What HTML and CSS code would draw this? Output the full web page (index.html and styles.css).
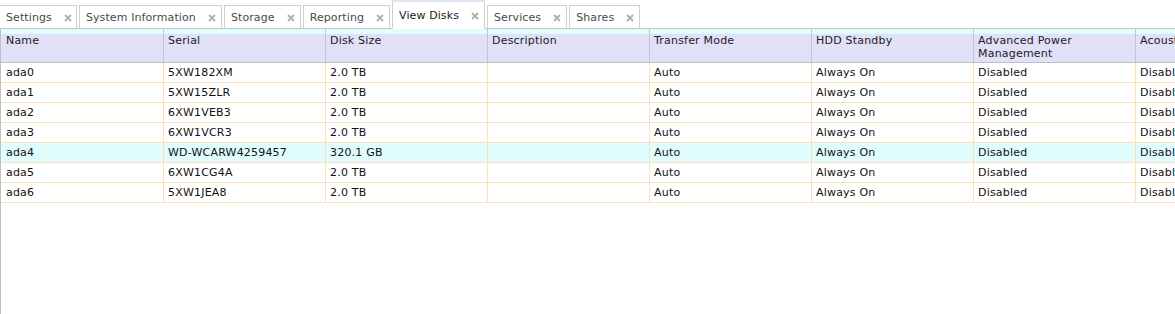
FILE: index.html
```html
<!DOCTYPE html>
<html>
<head>
<meta charset="utf-8">
<link rel="stylesheet" href="styles.css">
</head>
<body>
<div class="tabbar">
  <div class="tab tab-first"><span class="tab-label">Settings</span><svg class="tab-close" width="8" height="8" viewBox="0 0 8 8"><path d="M1 1L7 7M7 1L1 7"/></svg></div>
  <div class="tab"><span class="tab-label">System Information</span><svg class="tab-close" width="8" height="8" viewBox="0 0 8 8"><path d="M1 1L7 7M7 1L1 7"/></svg></div>
  <div class="tab"><span class="tab-label">Storage</span><svg class="tab-close" width="8" height="8" viewBox="0 0 8 8"><path d="M1 1L7 7M7 1L1 7"/></svg></div>
  <div class="tab"><span class="tab-label">Reporting</span><svg class="tab-close" width="8" height="8" viewBox="0 0 8 8"><path d="M1 1L7 7M7 1L1 7"/></svg></div>
  <div class="tab tab-active"><span class="tab-label">View Disks</span><svg class="tab-close" width="8" height="8" viewBox="0 0 8 8"><path d="M1 1L7 7M7 1L1 7"/></svg></div>
  <div class="tab"><span class="tab-label">Services</span><svg class="tab-close" width="8" height="8" viewBox="0 0 8 8"><path d="M1 1L7 7M7 1L1 7"/></svg></div>
  <div class="tab"><span class="tab-label">Shares</span><svg class="tab-close" width="8" height="8" viewBox="0 0 8 8"><path d="M1 1L7 7M7 1L1 7"/></svg></div>
</div>
<div class="grid-wrap">
  <table class="grid">
    <thead>
      <tr>
        <th class="c-first">Name</th>
        <th>Serial</th>
        <th>Disk Size</th>
        <th>Description</th>
        <th>Transfer Mode</th>
        <th>HDD Standby</th>
        <th>Advanced Power Management</th>
        <th>Acoustic Level</th>
      </tr>
    </thead>
    <tbody>
      <tr><td class="c-first">ada0</td><td>5XW182XM</td><td>2.0 TB</td><td></td><td>Auto</td><td>Always On</td><td>Disabled</td><td>Disabled</td></tr>
      <tr><td class="c-first">ada1</td><td>5XW15ZLR</td><td>2.0 TB</td><td></td><td>Auto</td><td>Always On</td><td>Disabled</td><td>Disabled</td></tr>
      <tr><td class="c-first">ada2</td><td>6XW1VEB3</td><td>2.0 TB</td><td></td><td>Auto</td><td>Always On</td><td>Disabled</td><td>Disabled</td></tr>
      <tr><td class="c-first">ada3</td><td>6XW1VCR3</td><td>2.0 TB</td><td></td><td>Auto</td><td>Always On</td><td>Disabled</td><td>Disabled</td></tr>
      <tr class="row-hover"><td class="c-first">ada4</td><td>WD-WCARW4259457</td><td>320.1 GB</td><td></td><td>Auto</td><td>Always On</td><td>Disabled</td><td>Disabled</td></tr>
      <tr><td class="c-first">ada5</td><td>6XW1CG4A</td><td>2.0 TB</td><td></td><td>Auto</td><td>Always On</td><td>Disabled</td><td>Disabled</td></tr>
      <tr><td class="c-first">ada6</td><td>5XW1JEA8</td><td>2.0 TB</td><td></td><td>Auto</td><td>Always On</td><td>Disabled</td><td>Disabled</td></tr>
    </tbody>
  </table>
</div>
</body>
</html>
```
FILE: styles.css
```css
html, body {
  margin: 0;
  padding: 0;
  background: #fff;
  width: 1175px;
  height: 314px;
  overflow: hidden;
  font-family: "DejaVu Sans", Verdana, sans-serif;
  font-size: 11px;
  letter-spacing: 0.2px;
  color: #111;
}

.tabbar {
  display: flex;
  align-items: flex-end;
  gap: 2px;
  height: 28px;
  border-bottom: 1px solid #c4c4c4;
  letter-spacing: 0.1px;
}

.tab {
  display: flex;
  align-items: center;
  height: 22px;
  margin-bottom: -1px;
  border: 1px solid #cfcfcf;
  border-bottom: 1px solid #c4c4c4;
  background: #fff;
  padding: 0 5px 0 6px;
  color: #4a4a4a;
  box-sizing: content-box;
}

.tab-first {
  border-left: none;
  padding-left: 6px;
  padding-right: 4px;
}

.tab-label {
  white-space: nowrap;
}

.tab-close {
  margin-left: 12px;
  margin-top: 1px;
  stroke: #b0b0b0;
  stroke-width: 1.9;
  fill: none;
}

.tab-active {
  height: 26px;
  border-top: 3px solid #dde6f2;
  border-bottom: 1px solid #fff;
  color: #222;
}

.grid-wrap {
  border-left: 1px solid #c0c0c0;
  height: 285px;
  overflow: hidden;
}

.grid {
  table-layout: fixed;
  border-collapse: separate;
  border-spacing: 0;
  width: 1297px;
}

.grid th, .grid td {
  box-sizing: border-box;
  width: 162px;
  padding: 0 3px 0 4px;
  text-align: left;
  font-weight: normal;
  white-space: nowrap;
  overflow: hidden;
}

.grid .c-first {
  width: 163px;
  padding-left: 5px;
}

.grid th {
  height: 34px;
  vertical-align: top;
  padding-top: 5px;
  line-height: 13px;
  white-space: normal;
  color: #222;
  background: linear-gradient(#e0fcfc 0, #e0fcfc 5px, #e0e0f8 5px);
  border-right: 1px solid #c6c6c6;
  border-bottom: 1px solid #c0c0c0;
}

.grid td {
  height: 20px;
  line-height: 19px;
  vertical-align: middle;
  border-right: 1px solid #fde0b8;
  border-bottom: 1px solid #fde0b8;
}

.grid tr.row-hover td {
  background: #e0fcfc;
}
```
